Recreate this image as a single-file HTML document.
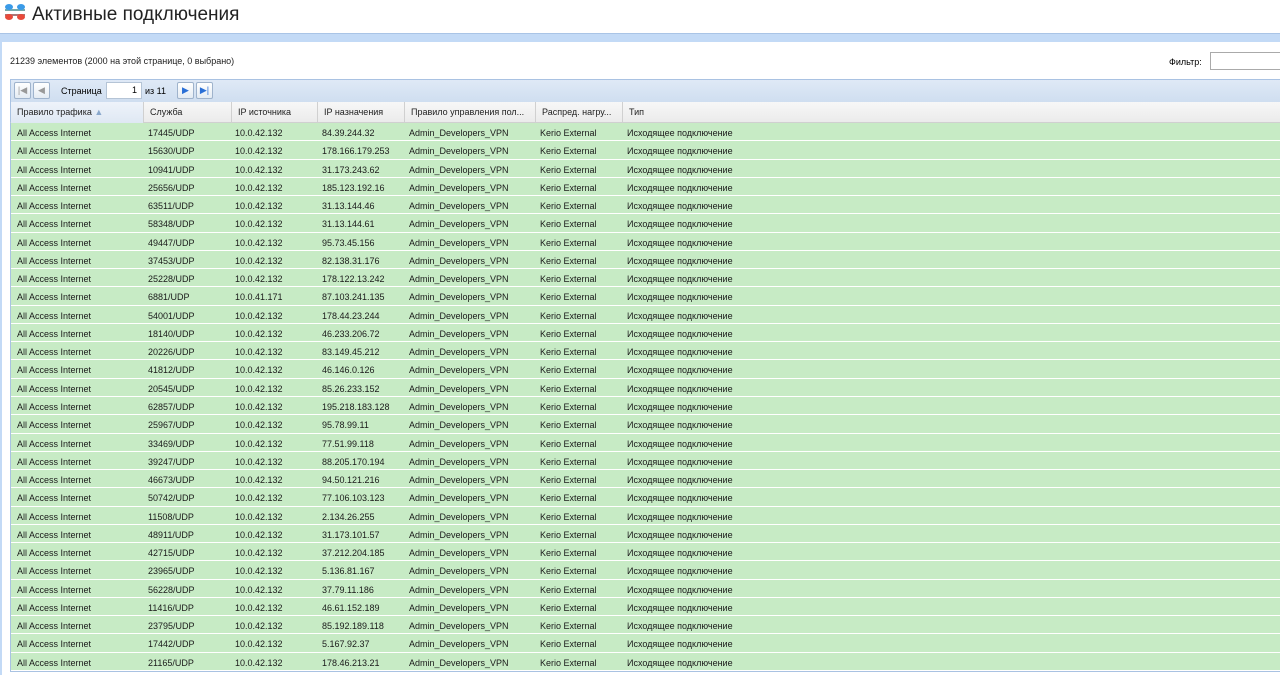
<!DOCTYPE html>
<html><head><meta charset="utf-8"><style>
*{box-sizing:border-box;margin:0;padding:0}
body{width:1280px;height:675px;overflow:hidden;background:#fff;font-family:"Liberation Sans","DejaVu Sans",sans-serif;font-size:10px;color:#000;position:relative}
.title{position:absolute;left:32px;top:4px;font-size:19px;color:#222}
.strip{position:absolute;left:0;top:33px;width:1280px;height:9px;background:#c3daf6;border-top:1px solid #a9c4e6}
.panel{position:absolute;left:0;top:42px;width:1280px;height:633px;background:#fff;border-left:2px solid #c3daf6}
.info{position:absolute;left:10px;top:56px;font-size:9px;color:#222}
.flt{position:absolute;left:1169px;top:57px;font-size:9px}
.fbox{position:absolute;left:1210px;top:52px;width:75px;height:18px;border:1px solid #aaa;background:#fff}
.tb{position:absolute;left:10px;top:79px;width:1270px;height:23px;background:linear-gradient(#dfe9f6,#cfdef0);border-top:1px solid #a9c2e2;border-left:1px solid #a9c2e2}
.btn{position:absolute;top:2px;width:17px;height:17px;border:1px solid #9fb3cc;border-radius:2px;background:linear-gradient(#fff,#e4ebf3)}
.pg{position:absolute;top:6px;font-size:9px}
.pin{position:absolute;left:95px;top:2px;width:36px;height:17px;background:#fff;border:1px solid #b5c4d6;text-align:right;padding-right:4px;font-size:9px;line-height:15px}
.hd{position:absolute;left:10px;top:102px;width:1270px;height:21px;background:linear-gradient(#f7f7f7,#ebebeb);border-bottom:1px solid #d0d0d0;border-left:1px solid #a9c2e2}
.hd div{position:absolute;top:0;height:21px;line-height:21px;padding-left:6px;border-right:1px solid #d0d0d0;font-size:9px;color:#222}
.rows{position:absolute;left:10px;top:123px;width:1270px;border-left:1px solid #a9c2e2;border-bottom:1px solid #a9c2e2}
.r{height:18.28px;background:#c7ebc5;border-bottom:1px solid #fff;position:relative;font-size:9px;color:#1a1a1a}
.r span{position:absolute;top:5px}
</style></head><body>
<svg style="position:absolute;left:3px;top:3px" width="24" height="18" viewBox="0 0 24 18">
<rect x="2" y="6" width="20" height="2" fill="#7aa"/><rect x="2" y="11" width="20" height="2" fill="#a77"/>
<ellipse cx="6" cy="4" rx="4" ry="3" fill="#3a9be8"/><ellipse cx="18" cy="4" rx="4" ry="3" fill="#3a9be8"/>
<ellipse cx="6" cy="14" rx="4" ry="3" fill="#e84a3a"/><ellipse cx="18" cy="14" rx="4" ry="3" fill="#e84a3a"/></svg>
<div class="title">Активные подключения</div>
<div class="strip"></div>
<div class="panel"></div>
<div class="info">21239 элементов (2000 на этой странице, 0 выбрано)</div>
<div class="flt">Фильтр:</div><div class="fbox"></div>
<div class="tb">
<div class="btn" style="left:3px;color:#999;font-size:9px;text-align:center;line-height:15px">|◀</div>
<div class="btn" style="left:22px;color:#999;font-size:9px;text-align:center;line-height:15px">◀</div>
<div class="pg" style="left:50px">Страница</div>
<div class="pin">1</div>
<div class="pg" style="left:134px">из 11</div>
<div class="btn" style="left:166px;color:#2a6fd6;font-size:9px;text-align:center;line-height:15px">▶</div>
<div class="btn" style="left:185px;color:#2a6fd6;font-size:9px;text-align:center;line-height:15px">▶|</div>
</div>
<div class="hd">
<div style="left:0;width:133px;background:linear-gradient(#eef3fa,#dfe8f3)">Правило трафика <span style="color:#8aa8cc">▲</span></div>
<div style="left:133px;width:88px">Служба</div>
<div style="left:221px;width:86px">IP источника</div>
<div style="left:307px;width:87px">IP назначения</div>
<div style="left:394px;width:131px">Правило управления пол...</div>
<div style="left:525px;width:87px">Распред. нагру...</div>
<div style="left:612px;width:658px;border-right:none">Тип</div>
</div>
<div class="rows" id="rows"></div>
<script>
var d=[["17445","10.0.42.132","84.39.244.32"],["15630","10.0.42.132","178.166.179.253"],["10941","10.0.42.132","31.173.243.62"],["25656","10.0.42.132","185.123.192.16"],["63511","10.0.42.132","31.13.144.46"],["58348","10.0.42.132","31.13.144.61"],["49447","10.0.42.132","95.73.45.156"],["37453","10.0.42.132","82.138.31.176"],["25228","10.0.42.132","178.122.13.242"],["6881","10.0.41.171","87.103.241.135"],["54001","10.0.42.132","178.44.23.244"],["18140","10.0.42.132","46.233.206.72"],["20226","10.0.42.132","83.149.45.212"],["41812","10.0.42.132","46.146.0.126"],["20545","10.0.42.132","85.26.233.152"],["62857","10.0.42.132","195.218.183.128"],["25967","10.0.42.132","95.78.99.11"],["33469","10.0.42.132","77.51.99.118"],["39247","10.0.42.132","88.205.170.194"],["46673","10.0.42.132","94.50.121.216"],["50742","10.0.42.132","77.106.103.123"],["11508","10.0.42.132","2.134.26.255"],["48911","10.0.42.132","31.173.101.57"],["42715","10.0.42.132","37.212.204.185"],["23965","10.0.42.132","5.136.81.167"],["56228","10.0.42.132","37.79.11.186"],["11416","10.0.42.132","46.61.152.189"],["23795","10.0.42.132","85.192.189.118"],["17442","10.0.42.132","5.167.92.37"],["21165","10.0.42.132","178.46.213.21"]];
var h="";d.forEach(function(x){h+='<div class="r"><span style="left:6px">All Access Internet</span><span style="left:137px">'+x[0]+'/UDP</span><span style="left:224px">'+x[1]+'</span><span style="left:311px">'+x[2]+'</span><span style="left:398px">Admin_Developers_VPN</span><span style="left:529px">Kerio External</span><span style="left:616px">Исходящее подключение</span></div>';});
document.getElementById("rows").innerHTML=h;
</script>
</body></html>
